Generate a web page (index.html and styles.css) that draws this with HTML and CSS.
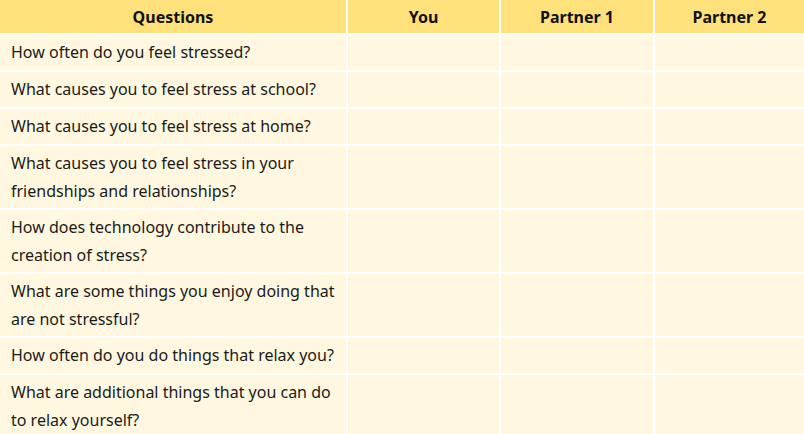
FILE: index.html
```html
<!DOCTYPE html>
<html>
<head>
<meta charset="utf-8">
<link rel="stylesheet" href="styles.css">
</head>
<body>
<div class="sheet">
  <div class="head">Questions</div>
  <div class="head">You</div>
  <div class="head">Partner 1</div>
  <div class="head">Partner 2</div>

  <div class="q">How often do you feel stressed?</div>
  <div class="a"></div><div class="a"></div><div class="a"></div>

  <div class="q">What causes you to feel stress at school?</div>
  <div class="a"></div><div class="a"></div><div class="a"></div>

  <div class="q">What causes you to feel stress at home?</div>
  <div class="a"></div><div class="a"></div><div class="a"></div>

  <div class="q">What causes you to feel stress in your friendships and relationships?</div>
  <div class="a"></div><div class="a"></div><div class="a"></div>

  <div class="q">How does technology contribute to the creation of stress?</div>
  <div class="a"></div><div class="a"></div><div class="a"></div>

  <div class="q">What are some things you enjoy doing that are not stressful?</div>
  <div class="a"></div><div class="a"></div><div class="a"></div>

  <div class="q">How often do you do things that relax you?</div>
  <div class="a"></div><div class="a"></div><div class="a"></div>

  <div class="q">What are additional things that you can do to relax yourself?</div>
  <div class="a"></div><div class="a"></div><div class="a"></div>
</div>
</body>
</html>
```

FILE: styles.css
```css
html, body {
  margin: 0;
  padding: 0;
  background: #ffffff;
}
body {
  font-family: "Noto Sans", "Open Sans", sans-serif;
  color: #1b1b1b;
  overflow: hidden;
}
.sheet {
  display: grid;
  grid-template-columns: 346px 151px 152px 149px;
  gap: 2px;
  width: 804px;
}
.head {
  background: #ffe17b;
  font-weight: bold;
  font-size: 16px;
  line-height: 34px;
  height: 33px;
  text-align: center;
  color: #111;
}
.q {
  background: #fff7df;
  font-size: 16px;
  line-height: 28px;
  padding: 3px 11px;
  min-height: 29px;
}
.a {
  background: #fff7df;
}
```
